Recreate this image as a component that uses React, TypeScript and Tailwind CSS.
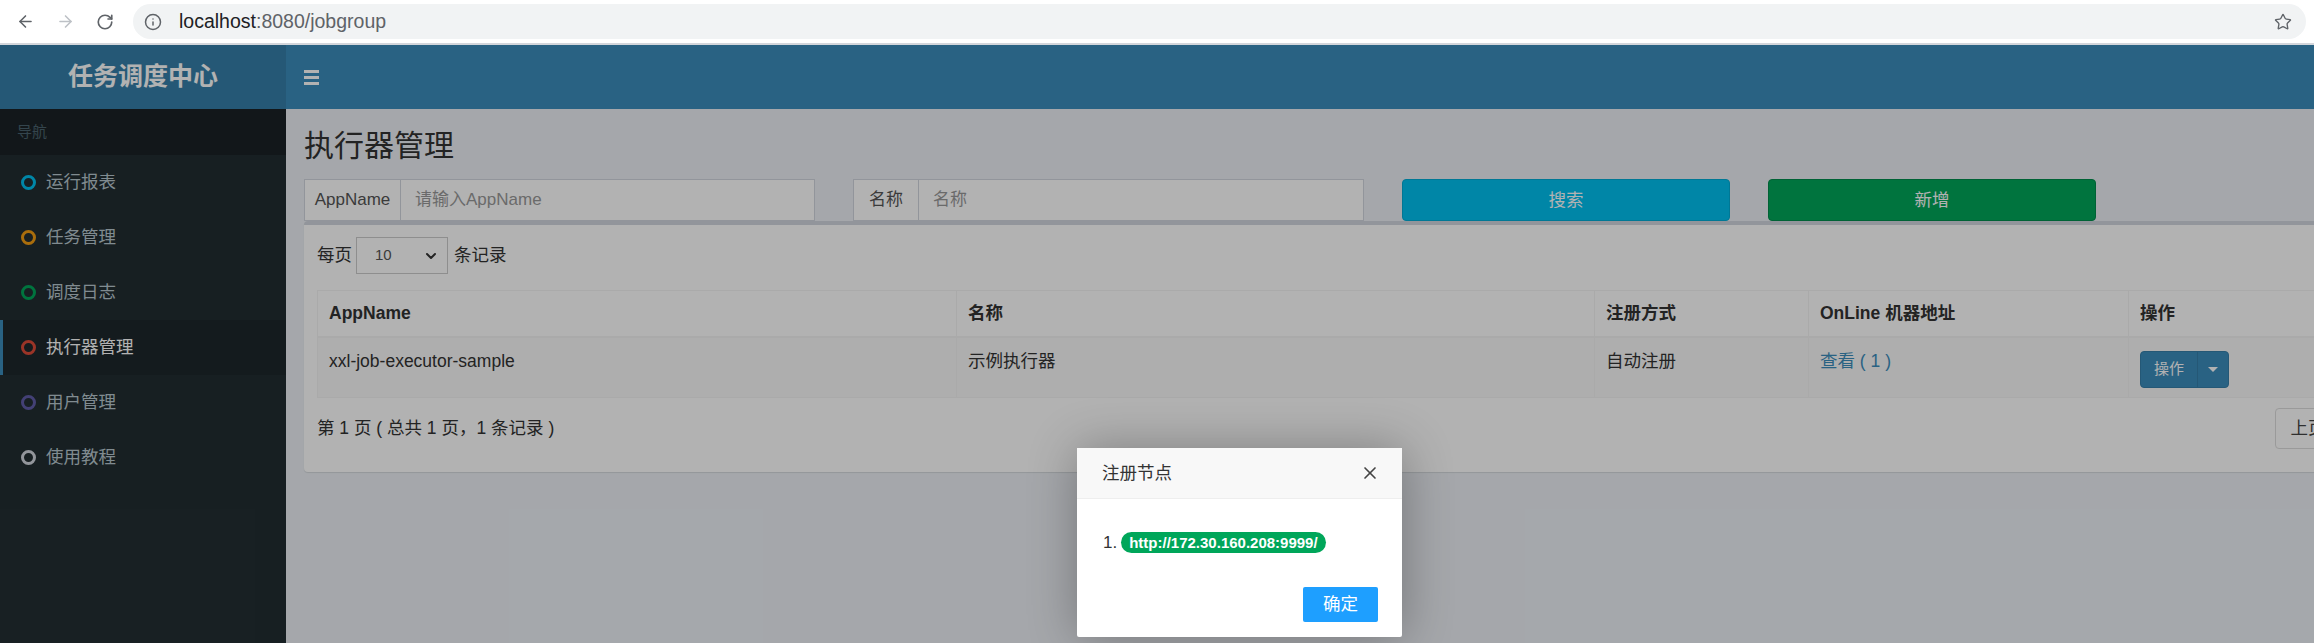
import { ArrowLeft, ArrowRight, RotateCw, Info, Star, ChevronDown, X } from "lucide-react";

const menu = [
  { name: "运行报表", ring: "border-[#00c0ef]" },
  { name: "任务管理", ring: "border-[#f39c12]" },
  { name: "调度日志", ring: "border-[#00a65a]" },
  { name: "执行器管理", ring: "border-[#dd4b39]", active: true },
  { name: "用户管理", ring: "border-[#605ca8]" },
  { name: "使用教程", ring: "border-[#d2d6de]" },
];

function BrowserBar() {
  return (
    <div className="h-[45px] shrink-0 bg-white border-b-2 border-[#d3d6db] flex items-center">
      <div className="w-[133px] flex items-center pl-[16px] gap-[21px] text-[#5f6368]">
        <ArrowLeft size={19} strokeWidth={2} />
        <ArrowRight size={19} strokeWidth={2} className="text-[#bdc1c6]" />
        <RotateCw size={18} strokeWidth={2.2} />
      </div>
      <div className="w-[2173px] h-[35px] rounded-full bg-[#f1f3f4] flex items-center pl-[11px] pr-[14px]">
        <Info size={18} strokeWidth={2} className="text-[#5f6368]" />
        <span className="ml-[17px] text-[19.5px] text-[#202124]">
          localhost<span className="text-[#5f6368]">:8080/jobgroup</span>
        </span>
        <Star size={18} strokeWidth={1.8} className="ml-auto text-[#5f6368]" />
      </div>
    </div>
  );
}

function Sidebar() {
  return (
    <div className="w-[286px] shrink-0 bg-[#222d32]">
      <div className="h-[46px] bg-[#1a2226] flex items-center pl-[17px] text-[15px] text-[#4b646f]">
        导航
      </div>
      {menu.map((m) => (
        <div
          key={m.name}
          className={
            m.active
              ? "h-[55px] flex items-center pl-[18px] border-l-[3px] border-[#3c8dbc] bg-[#1e282c] text-white text-[17.5px]"
              : "h-[55px] flex items-center pl-[21px] text-[#b8c7ce] text-[17.5px]"
          }
        >
          <span className={`w-[15px] h-[15px] rounded-full border-[3px] ${m.ring}`} />
          <span className="ml-[10px]">{m.name}</span>
        </div>
      ))}
    </div>
  );
}

function InputGroup({ label, placeholder, addonW }: { label: string; placeholder: string; addonW: string }) {
  return (
    <div className="flex h-[42px] w-full">
      <div
        className={`${addonW} shrink-0 flex items-center justify-center border border-[#d2d6de] bg-white text-[17px] text-[#555]`}
      >
        {label}
      </div>
      <div className="flex-1 flex items-center border border-l-0 border-[#d2d6de] bg-white pl-[14px] text-[17px] text-[#999]">
        {placeholder}
      </div>
    </div>
  );
}

function Content() {
  return (
    <div className="flex-1 min-w-0 overflow-hidden bg-[#ecf0f5] pl-[18px] pt-[20px]">
      <h1 className="text-[30px] leading-[33px] text-[#333]">执行器管理</h1>
      <div className="mt-[17px] flex gap-[38px]">
        <div className="w-[511px] shrink-0">
          <InputGroup label="AppName" placeholder="请输入AppName" addonW="w-[97px]" />
        </div>
        <div className="w-[511px] shrink-0">
          <InputGroup label="名称" placeholder="名称" addonW="w-[66px]" />
        </div>
        <div className="w-[328px] shrink-0 h-[42px] rounded-[4px] bg-[#00c0ef] border border-[#00acd6] flex items-center justify-center text-white text-[17.5px]">
          搜索
        </div>
        <div className="w-[328px] shrink-0 h-[42px] rounded-[4px] bg-[#00a65a] border border-[#008d4c] flex items-center justify-center text-white text-[17.5px]">
          新增
        </div>
      </div>

      <div className="w-[2116px] bg-white border-t-4 border-[#d2d6de] rounded-[4px] shadow-[0_1px_1px_rgba(0,0,0,0.1)] px-[13px] pt-[12px] pb-[23px]">
        <div className="flex items-center h-[37px] text-[17.5px] text-[#333]">
          <span>每页</span>
          <div className="ml-[4px] w-[92px] h-[37px] border border-[#ccc] flex items-center pl-[18px] pr-[8px] text-[15px] text-[#555]">
            <span>10</span>
            <ChevronDown size={16} strokeWidth={3} className="ml-auto text-[#333]" />
          </div>
          <span className="ml-[6px]">条记录</span>
        </div>

        <table className="mt-[16px] w-[2090px] table-fixed border-collapse border border-[#f4f4f4] text-[17.5px] text-[#333]">
          <colgroup>
            <col className="w-[639px]" />
            <col className="w-[638px]" />
            <col className="w-[214px]" />
            <col className="w-[320px]" />
            <col className="w-[279px]" />
          </colgroup>
          <thead>
            <tr className="h-[46px]">
              <th className="text-left font-bold px-[11px] border border-[#f4f4f4] border-b-2">AppName</th>
              <th className="text-left font-bold px-[11px] border border-[#f4f4f4] border-b-2">名称</th>
              <th className="text-left font-bold px-[11px] border border-[#f4f4f4] border-b-2">注册方式</th>
              <th className="text-left font-bold px-[11px] border border-[#f4f4f4] border-b-2">OnLine 机器地址</th>
              <th className="text-left font-bold px-[11px] border border-[#f4f4f4] border-b-2">操作</th>
            </tr>
          </thead>
          <tbody>
            <tr className="h-[61px] bg-[#f9f9f9] align-top">
              <td className="px-[11px] pt-[10px] border border-[#f4f4f4]">xxl-job-executor-sample</td>
              <td className="px-[11px] pt-[10px] border border-[#f4f4f4]">示例执行器</td>
              <td className="px-[11px] pt-[10px] border border-[#f4f4f4]">自动注册</td>
              <td className="px-[11px] pt-[10px] border border-[#f4f4f4] text-[#3c8dbc]">查看 ( 1 )</td>
              <td className="px-[11px] pt-[13px] border border-[#f4f4f4]">
                <div className="flex w-[89px] h-[37px] rounded-[4px] bg-[#3c8dbc] border border-[#367fa9] text-white text-[15px]">
                  <div className="w-[57px] flex items-center justify-center border-r border-[#367fa9]">操作</div>
                  <div className="flex-1 flex items-center justify-center">
                    <span className="w-0 h-0 border-l-[5px] border-r-[5px] border-t-[5px] border-l-transparent border-r-transparent border-t-white" />
                  </div>
                </div>
              </td>
            </tr>
          </tbody>
        </table>

        <div className="mt-[10px] w-[2090px] flex items-center h-[41px] text-[17.5px] text-[#333]">
          <span>第 1 页 ( 总共 1 页，1 条记录 )</span>
          <div className="ml-auto flex">
            <div className="w-[66px] h-[41px] border border-[#ddd] rounded-l-[4px] bg-white flex items-center justify-center text-[#444]">
              上页
            </div>
            <div className="w-[66px] h-[41px] border border-l-0 border-[#ddd] rounded-r-[4px] bg-white flex items-center justify-center text-[#444]">
              下页
            </div>
          </div>
        </div>
      </div>
    </div>
  );
}

function Modal() {
  return (
    <div className="absolute left-[1077px] top-[403px] w-[325px] h-[189px] bg-white rounded-[2px] shadow-[1px_1px_50px_rgba(0,0,0,0.3)] flex flex-col">
      <div className="h-[51px] shrink-0 bg-[#f8f8f8] border-b border-[#eee] flex items-center pl-[25px] pr-[22px] text-[17.5px] text-[#333]">
        <span>注册节点</span>
        <X size={20} strokeWidth={2} className="ml-auto text-[#444]" />
      </div>
      <div className="flex items-center pl-[26px] pt-[31px] text-[17px] text-[#333]">
        <span className="text-[#333]">1.</span>
        <span className="ml-[4px] h-[21px] px-[8px] rounded-full bg-[#00a65a] text-white font-bold text-[15px] leading-[21px] font-['Liberation_Sans',sans-serif]">
          http://172.30.160.208:9999/
        </span>
      </div>
      <div className="mt-auto mb-[15px] mr-[24px] self-end w-[75px] h-[35px] rounded-[2px] bg-[#1e9fff] text-white text-[17.5px] flex items-center justify-center">
        确定
      </div>
    </div>
  );
}

export default function App() {
  return (
    <div className="w-[2314px] h-[643px] overflow-hidden flex flex-col font-['Liberation_Sans','Noto_Sans_CJK_SC',sans-serif]">
      <BrowserBar />
      <div className="relative flex-1 flex flex-col overflow-hidden">
        <div className="h-[64px] shrink-0 flex">
          <div className="w-[286px] bg-[#367fa9] flex items-center justify-center text-white text-[25px] font-bold">
            任务调度中心
          </div>
          <div className="flex-1 bg-[#3c8dbc] flex items-center pl-[18px]">
            <div className="flex flex-col gap-[3px]">
              <span className="w-[15px] h-[3px] bg-white" />
              <span className="w-[15px] h-[3px] bg-white" />
              <span className="w-[15px] h-[3px] bg-white" />
            </div>
          </div>
        </div>
        <div className="flex-1 flex">
          <Sidebar />
          <Content />
        </div>
        <div className="absolute inset-0 bg-black/30" />
        <Modal />
      </div>
    </div>
  );
}
